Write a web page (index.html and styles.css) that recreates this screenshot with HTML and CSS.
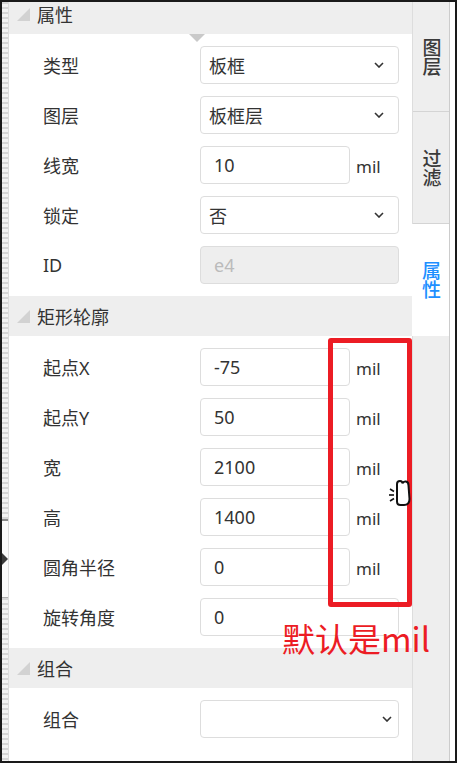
FILE: index.html
```html
<!DOCTYPE html>
<html lang="zh-CN">
  <head>
    <meta charset="UTF-8" />
    <meta name="viewport" content="width=device-width, initial-scale=1.0" />
    <title>属性面板</title>
    <link rel="stylesheet" href="styles.css">
  </head>

  <body>
    <div class="frame">
      <!-- 左侧拖动条 -->
      <div class="strip">
        <div class="strip-dots top"></div>
        <div class="strip-handle"><span class="handle-arrow"></span></div>
        <div class="strip-dots"></div>
      </div>

      <div class="panel">
        <div class="section first">
          <div class="section-head">
            <svg class="fold" width="13" height="13" viewBox="0 0 13 13"><polygon points="13,0 13,13 0,13" /></svg>
            <span>属性</span>
          </div>
          <div class="section-body">
            <div class="row">
              <span class="label">类型</span>
              <div class="select"><span>板框</span><svg class="chev" width="10" height="6" viewBox="0 0 10 6"><polyline points="1,1 5,5 9,1" /></svg></div>
            </div>
            <div class="row">
              <span class="label">图层</span>
              <div class="select"><span>板框层</span><svg class="chev" width="10" height="6" viewBox="0 0 10 6"><polyline points="1,1 5,5 9,1" /></svg></div>
            </div>
            <div class="row">
              <span class="label">线宽</span>
              <div class="input">10</div>
              <span class="unit">mil</span>
            </div>
            <div class="row">
              <span class="label">锁定</span>
              <div class="select"><span>否</span><svg class="chev" width="10" height="6" viewBox="0 0 10 6"><polyline points="1,1 5,5 9,1" /></svg></div>
            </div>
            <div class="row">
              <span class="label">ID</span>
              <div class="input wide disabled">e4</div>
            </div>
          </div>
        </div>

        <div class="section">
          <div class="section-head">
            <svg class="fold" width="13" height="13" viewBox="0 0 13 13"><polygon points="13,0 13,13 0,13" /></svg>
            <span>矩形轮廓</span>
          </div>
          <div class="section-body">
            <div class="row">
              <span class="label">起点X</span>
              <div class="input">-75</div>
              <span class="unit">mil</span>
            </div>
            <div class="row">
              <span class="label">起点Y</span>
              <div class="input">50</div>
              <span class="unit">mil</span>
            </div>
            <div class="row">
              <span class="label">宽</span>
              <div class="input">2100</div>
              <span class="unit">mil</span>
            </div>
            <div class="row">
              <span class="label">高</span>
              <div class="input">1400</div>
              <span class="unit">mil</span>
            </div>
            <div class="row">
              <span class="label">圆角半径</span>
              <div class="input">0</div>
              <span class="unit">mil</span>
            </div>
            <div class="row">
              <span class="label">旋转角度</span>
              <div class="input wide">0</div>
            </div>
          </div>
        </div>

        <div class="section">
          <div class="section-head">
            <svg class="fold" width="13" height="13" viewBox="0 0 13 13"><polygon points="13,0 13,13 0,13" /></svg>
            <span>组合</span>
          </div>
          <div class="section-body">
            <div class="row">
              <span class="label">组合</span>
              <div class="select"><span></span><svg class="chev far" width="10" height="6" viewBox="0 0 10 6"><polyline points="1,1 5,5 9,1" /></svg></div>
            </div>
          </div>
        </div>
      </div>

      <div class="tabs">
        <div class="tab t1"><span>图层</span></div>
        <div class="tab t2"><span>过滤</span></div>
        <div class="tab active"><span>属性</span></div>
      </div>
      <div class="gap"></div>

      <!-- 标注 -->
      <div class="mark-box"></div>
      <div class="mark-text">默认是mil</div>
      <svg class="cursor" width="26" height="30" viewBox="0 0 26 30">
        <path d="M10 6 Q10 3 13 3 Q15.5 3 15.5 5.5 Q16.5 3 19 3.5 Q21.5 4 21.5 7.5 L22.5 21 Q22.5 27 17 27 L13.5 27 Q10 27 10 23.5 Z" fill="#fff" stroke="#111" stroke-width="2" />
        <line x1="3" y1="11" x2="7" y2="13.5" stroke="#111" stroke-width="1.6" />
        <line x1="2" y1="17" x2="7" y2="17" stroke="#111" stroke-width="1.6" />
        <line x1="3" y1="23" x2="7" y2="20.5" stroke="#111" stroke-width="1.6" />
      </svg>
    </div>
  </body>
</html>
```

FILE: styles.css
```css
* {
  padding: 0;
  margin: 0;
  box-sizing: border-box;
}

html,
body {
  width: 100%;
  height: 100%;
  background-color: #fff;
}

body {
  font-family: "Noto Sans", "Noto Sans CJK SC", sans-serif;
  color: #333;
}

.frame {
  position: relative;
  display: flex;
  width: 457px;
  height: 763px;
  border: 2px solid #1a1a1a;
  overflow: hidden;
  background-color: #fff;
}

/* 左侧拖动条 */
.strip {
  display: flex;
  flex-direction: column;
  width: 7px;
  border-right: 1px solid #dcdcdc;
  background-color: #f3f3f3;
}

.strip-dots {
  flex: 1;
  background: repeating-linear-gradient(to bottom, #d6d6d6 0, #d6d6d6 2px, #f3f3f3 2px, #f3f3f3 5px);
}

.strip-dots.top {
  flex: none;
  height: 517px;
}

.strip-handle {
  display: flex;
  align-items: center;
  height: 79px;
  border-top: 2px solid #8a8a8a;
  border-bottom: 1px solid #b0b0b0;
  background-color: #fafafa;
}

.handle-arrow {
  display: block;
  width: 0;
  height: 0;
  border-top: 6px solid transparent;
  border-bottom: 6px solid transparent;
  border-left: 6px solid #3a3a3a;
}

.panel {
  width: 403px;
  font-size: 18px;
}

.section-head {
  display: flex;
  align-items: center;
  height: 40px;
  padding-left: 8px;
  background-color: #eeeeee;
}

.first .section-head {
  margin-top: -8px;
}

.fold {
  margin-right: 7px;
  fill: #d2d2d2;
}

.section-body {
  position: relative;
  padding: 6px 0;
}

.first .section-body::before {
  content: "";
  position: absolute;
  top: 0;
  left: 180px;
  border-left: 8px solid transparent;
  border-right: 8px solid transparent;
  border-top: 8px solid #c9c9c9;
}

.row {
  display: flex;
  align-items: center;
  height: 50px;
  padding-left: 34px;
}

.label {
  width: 157px;
}

.select,
.input {
  display: flex;
  align-items: center;
  height: 38px;
  border: 1px solid #dddddd;
  border-radius: 4px;
  background-color: #fff;
}

.select {
  justify-content: space-between;
  width: 199px;
  padding: 0 14px 0 8px;
}

.chev {
  fill: none;
  stroke: #333;
  stroke-width: 1.6;
}

.chev.far {
  margin-right: -8px;
}

.input {
  width: 150px;
  padding-left: 13px;
}

.input.wide {
  width: 199px;
}

.input.disabled {
  background-color: #eeeeee;
  color: #bbbbbb;
}

.unit {
  margin-left: 6px;
  margin-top: 3px;
  font-size: 17px;
}

/* 右侧标签页 */
.tabs {
  width: 38px;
  border-left: 1px solid #dddddd;
  border-right: 1px solid #cccccc;
  background-color: #eeeeee;
}

.tab {
  display: flex;
  align-items: center;
  justify-content: center;
  border-bottom: 1px solid #d4d4d4;
  color: #3a3a3a;
  font-size: 19px;
  font-weight: 500;
}

.tab span {
  writing-mode: vertical-rl;
}

.t1 {
  height: 110px;
}

.t2 {
  height: 112px;
}

.tab.active {
  height: 112px;
  margin-left: -1px;
  border-bottom: none;
  background-color: #fff;
  color: #1e8fff;
}

.gap {
  flex: 1;
}

/* 标注 */
.mark-box {
  position: absolute;
  left: 326px;
  top: 336px;
  width: 84px;
  height: 269px;
  border: 5px solid #ec1c24;
  border-radius: 3px;
}

.mark-text {
  position: absolute;
  left: 280px;
  top: 620px;
  font-family: "Noto Sans CJK SC", sans-serif;
  font-size: 33px;
  line-height: 33px;
  color: #ec1c24;
}

.cursor {
  position: absolute;
  left: 385px;
  top: 476px;
}
```
